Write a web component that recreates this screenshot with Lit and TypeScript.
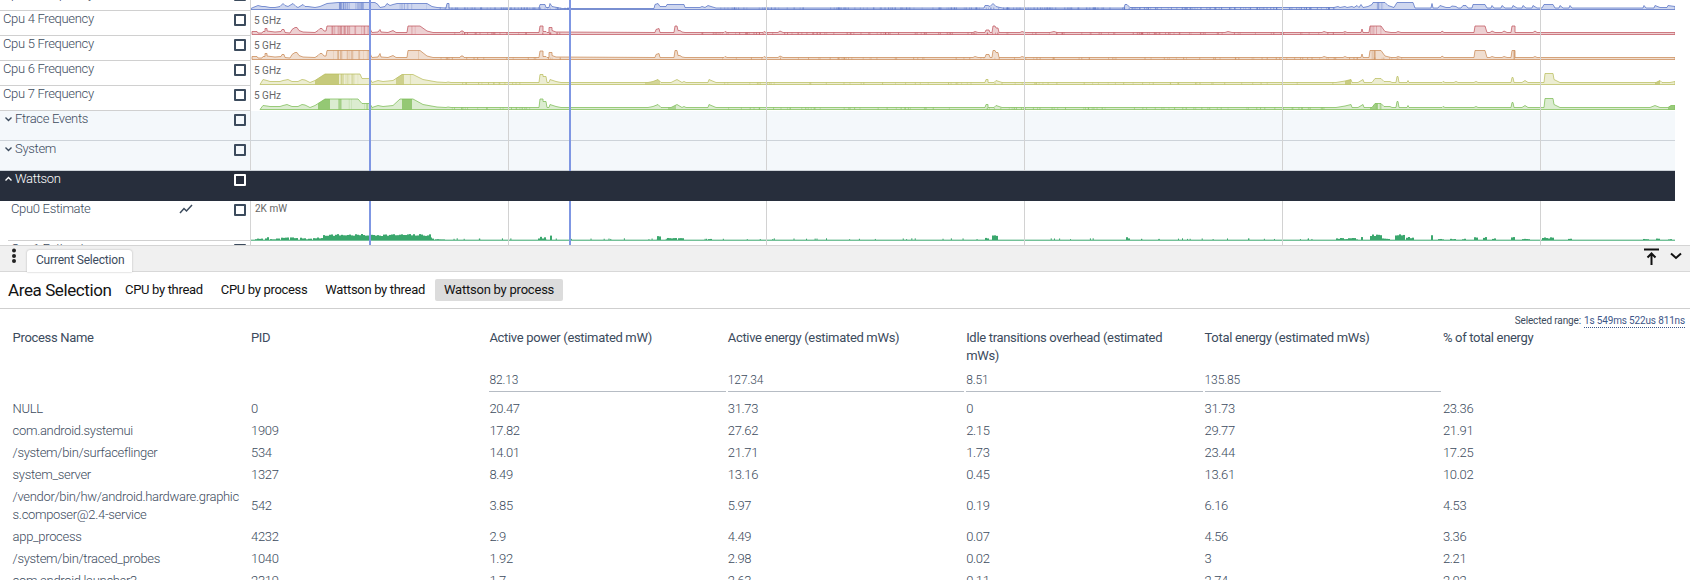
import { LitElement, html, svg, css } from "lit";
import { customElement } from "lit/decorators.js";

// x range of the timeline, in page pixels
const X0 = 251;
const X1 = 1675;
const GRID = [508, 766, 1024, 1282, 1540];
const SELECTION = [369, 569];

interface Series {
  id: string;
  color: string;
  points: string;
  solid?: number[][];
  stripes?: number[][];
  noise?: number[][];
}

// "x,h" pairs; h is height above the baseline
const SERIES: Series[] = [
  {
    id: "c3",
    color: "#5470c4",
    points:
      "251,1 253,2 258,4 262,3 265,3 270,2 275,2 280,3 283,6 285,4 288,3 293,6 296,3 298,2 303,5 305,3 308,3 315,2 320,3 327,6 338,7 368,7 375,7 378,5 380,2 385,3 387,6 390,4 393,5 397,6 427,6 432,3 437,2 446,1.5 447,6 449,6 449,1.5 539,1.5 540,5 545,5 546,2 549,2 550,6 552,3 557,2 562,1 654,1 655,5 658,6 660,3 666,3 667,5 684,5 685,2 700,2 702,3 705,2 708,4 711,3 716,1.5 984,1.5 985,4 988,4 990,3 993,6 996,3 1000,2 1003,1.5 1124,1.5 1125,5 1127,5 1130,2 1334,2 1338,3 1340,2 1345,3 1347,2 1352,3 1354,2 1357,4 1359,2 1361,5 1363,2 1368,3 1372,5 1373,7 1385,7 1388,4 1391,3 1394,2 1397,7 1413,7 1415,1.5 1431,1.5 1432,6 1433,1.5 1438,1.5 1440,4 1446,2 1450,2 1452,3.5 1456,3 1458,1.5 1461,1.5 1463,4 1466,4 1468,1.5 1472,1.5 1473,5 1485,5 1487,1.5 1491,1.5 1492,4 1494,1.5 1501,1.5 1502,4 1505,1.5 1512,1.5 1513,4 1517,1.5 1522,1.5 1523,4 1526,1.5 1532,1.5 1533,4 1537,1.5 1542,1.5 1544,5 1553,5 1555,1.5 1559,1.5 1560,4 1563,1.5 1569,1.5 1570,4 1572,1.5 1643,1.5 1644,4 1646,1.5 1654,1.5 1655,4 1660,2 1667,2 1668,4 1675,3",
    stripes: [[338, 368, 22], [395, 427, 6], [1373, 1385, 4]],
    noise: [[437, 570, 60], [720, 1335, 240]],
  },
  {
    id: "c4",
    color: "#c0555f",
    points:
      "252,3 257,3 258,1.5 262,1.5 263,3 265,3 265,6 267,6 267,3.5 275,2.5 281,3 282,5 284,5 285,2 290,1.5 292,5 295,7 297,7 299,4 303,2.5 315,2 318,4 320,6 322,6 324,3.5 326,3.5 327,8.5 369,8.5 371,4 372,2 378,2.5 380,5 381,2.5 388,2 393,4 396,2 407,2 408,8.5 420,8.5 427,3.5 433,2 460,2 461,3.5 463,3.5 464,2 539,2 540,8.5 543,8.5 543,3 546,3 547,2 549,2 549,7 552,7 552,4 556,2.5 655,2 656,5 659,6 660,2 674,2 675,8.5 677,8.5 678,4 680,4 682,2.5 685,2 724,2 725,3 727,2 763,2 764,3 766,2 778,2 780,3.5 783,2 973,2 975,3 978,2 985,2 986,4.5 989,4.5 990,2 992,2 993,8.5 995,8.5 996,6.5 998,6.5 999,2 1020,2 1022,3 1025,2 1050,2 1054,3 1057,2 1225,2 1228,3 1232,2 1322,2 1324,3 1327,2 1343,2 1345,3 1347,2 1361,2 1362,5.5 1363,2 1369,2 1370,8.5 1381,8.5 1385,3 1391,2 1396,2 1398,3 1401,2 1441,2 1442,3.5 1444,2 1474,2 1475,8.5 1485,8.5 1487,2 1490,2 1492,3.5 1495,2 1502,2 1504,3.5 1507,2 1511,2 1512,8.5 1515,8.5 1515,2 1533,2 1535,3.5 1537,2 1675,2",
    stripes: [[327, 369, 18], [408, 420, 2], [1370, 1381, 5]],
    noise: [[440, 560, 30], [700, 1345, 150]],
  },
  {
    id: "c5",
    color: "#c98a55",
    points:
      "252,3 257,3 258,1.5 262,1.5 263,3 265,3 265,6 267,6 267,3.5 275,2.5 281,3 282,5 284,5 285,2 290,1.5 292,5 295,7 297,7 299,4 303,2.5 315,2 318,4 320,6 322,6 324,3.5 326,3.5 327,9 369,9 371,4 372,2 378,2.5 380,6 381,2.5 388,2 393,4 396,2 407,2 408,9 420,9 427,3.5 433,2 460,2 461,3.5 463,3.5 464,2 539,2 540,8.5 543,8.5 543,3 546,3 547,2 549,2 549,7 552,7 552,4 556,2.5 655,2 656,5 659,6 660,2 674,2 675,9 677,9 678,4 680,4 682,2.5 685,2 724,2 725,3 727,2 763,2 764,3 766,2 778,2 780,3.5 783,2 973,2 975,3 978,2 985,2 986,5 989,5 990,2 992,2 993,9 995,9 996,7 998,7 999,2 1020,2 1022,3 1025,2 1322,2 1324,3 1327,2 1343,2 1345,3 1347,2 1361,2 1362,5.5 1363,2 1369,2 1370,9 1381,9 1385,3.5 1391,2 1396,2 1398,3 1401,2 1441,2 1442,3.5 1444,2 1474,2 1475,9 1485,9 1487,2 1490,2 1492,3 1495,2 1502,2 1504,3 1507,2 1511,2 1512,9 1515,9 1515,2 1533,2 1535,3 1537,2 1675,2",
    stripes: [[327, 369, 14], [408, 420, 1], [1370, 1381, 4], [1512, 1515, 3]],
    noise: [[440, 560, 20], [700, 1410, 100]],
  },
  {
    id: "c6",
    color: "#b9bd5e",
    points:
      "260,0 263,5 267,4 270,3 280,3 283,4 288,5 292,3 298,3 302,5 305,4.5 310,2 315,4 325,10.5 360,10.5 362,6 370,6 372,2 378,4 383,3 393,4 402,10 413,10 423,5 437,2.5 446,2 448,2.5 451,2 539,2 540,10 543,10 543,8 546,8 547,2 549,2 550,5 556,3 561,2 648,2 653,3 658,5 661,2 671,2 677,5 682,2 684,3 686,2 708,2 709,5 716,2 985,2 986,5 988,5 988,2 994,2 996,4 1002,2 1336,2 1345,3.5 1351,5 1352,2 1358,2 1363,5 1364,2 1372,2 1375,6 1381,6 1384,3 1390,3 1392,2 1396,2 1397,8 1398,8 1399,2 1407,2 1408,4 1409,2 1442,2 1443,3 1445,2 1454,2 1456,3 1458,2 1474,2 1476,3 1478,2 1511,2 1512,7 1513,7 1514,2 1522,2 1525,4 1528,2 1544,2 1545,11 1553,11 1554,5 1560,2 1656,2 1660,4 1662,2 1670,2 1675,3",
    solid: [[315, 339, 0.75], [341, 344, 0.35], [396, 404, 0.6], [1345, 1351, 0.7], [1655, 1660, 0.7], [645, 660, 0.5]],
    stripes: [[339, 372, 8], [404, 413, 1]],
    noise: [[450, 530, 14], [720, 1335, 70]],
  },
  {
    id: "c7",
    color: "#7cbc55",
    points:
      "260,0 263,4 267,3.5 270,3 280,3 283,4 287,5 292,3 298,3 302,5 305,4.5 310,2 315,4 325,10.5 358,10.5 362,6 370,6 372,2 378,4 383,3 393,4 400,10.5 413,10.5 423,5 437,2.5 446,2 448,2.5 451,2 539,2 540,10.5 543,10.5 543,8 546,8 547,2 549,2 550,5 556,3 561,2 648,2 653,3 658,5 661,2 671,2 677,5 682,2 684,3 686,2 708,2 709,5 716,2 985,2 986,5 988,5 988,2 994,2 996,4 1002,2 1336,2 1345,3.5 1351,5 1352,2 1358,2 1363,5 1364,2 1372,2 1375,6 1381,6 1384,3 1390,3 1392,2 1396,2 1397,8 1398,8 1399,2 1407,2 1408,4 1409,2 1442,2 1443,3 1445,2 1474,2 1476,3 1478,2 1511,2 1512,7 1513,7 1514,2 1522,2 1525,4 1528,2 1544,2 1545,11 1553,11 1554,5 1560,2 1650,2 1655,4 1660,2 1668,2 1671,4 1675,4",
    solid: [[318, 330, 0.75], [338, 341, 0.4], [402, 412, 0.75], [668, 676, 0.5], [1370, 1378, 0.6], [1668, 1675, 0.7]],
    stripes: [[330, 372, 8], [1375, 1381, 2]],
    noise: [[450, 530, 20], [720, 1335, 100]],
  },
];

// [from, to, min height, max height]; bars are drawn with random heights in between
const WATTSON = [
  [255, 263, 0.5, 1.5], [265, 269, 1.5, 3], [270, 280, 0.5, 1.5], [281, 288, 1, 3.5],
  [290, 298, 1, 3], [300, 305, 1, 2.5], [306, 312, 0.5, 1.5], [313, 322, 1.5, 2.5],
  [323, 405, 4, 6], [405, 430, 4, 6], [430, 434, 1, 3], [435, 445, 0.2, 1],
  [538, 546, 1, 3.5], [550, 552, 3, 5], [657, 660, 3, 5], [667, 677, 1.5, 2.5],
  [678, 683, 1, 2], [708, 711, 0.8, 1.2], [985, 989, 1.5, 2.5], [992, 997, 3, 5],
  [1126, 1130, 1.5, 3], [1336, 1357, 0.5, 2], [1361, 1363, 2.5, 3], [1370, 1381, 3.5, 5.5],
  [1382, 1390, 1, 2], [1395, 1405, 4.5, 6], [1406, 1413, 1.5, 3], [1431, 1432, 4.5, 5],
  [1438, 1443, 0.5, 1.5], [1450, 1455, 0.5, 1.5], [1462, 1466, 0.5, 1.5], [1474, 1477, 2, 3],
  [1483, 1487, 2, 3], [1492, 1496, 1, 2], [1511, 1514, 2.5, 3], [1522, 1530, 0.5, 1.5],
  [1542, 1553, 1.5, 3], [1568, 1572, 0.5, 1.5], [1643, 1648, 0.5, 1.5], [1656, 1660, 0.5, 1.5],
  [1668, 1672, 0.5, 1.5],
];

const COLUMNS = [
  "Process Name",
  "PID",
  "Active power (estimated mW)",
  "Active energy (estimated mWs)",
  "Idle transitions overhead (estimated mWs)",
  "Total energy (estimated mWs)",
  "% of total energy",
];

const TOTALS = ["", "", "82.13", "127.34", "8.51", "135.85", ""];

const ROWS = [
  ["NULL", "0", "20.47", "31.73", "0", "31.73", "23.36"],
  ["com.android.systemui", "1909", "17.82", "27.62", "2.15", "29.77", "21.91"],
  ["/system/bin/surfaceflinger", "534", "14.01", "21.71", "1.73", "23.44", "17.25"],
  ["system_server", "1327", "8.49", "13.16", "0.45", "13.61", "10.02"],
  ["/vendor/bin/hw/android.hardware.graphics.composer@2.4-service", "542", "3.85", "5.97", "0.19", "6.16", "4.53"],
  ["app_process", "4232", "2.9", "4.49", "0.07", "4.56", "3.36"],
  ["/system/bin/traced_probes", "1040", "1.92", "2.98", "0.02", "3", "2.21"],
  ["com.android.launcher3", "2319", "1.7", "2.63", "0.11", "2.74", "2.02"],
];

const TABS = ["CPU by thread", "CPU by process", "Wattson by thread", "Wattson by process"];

function rng(seed: number) {
  let s = seed;
  return () => {
    s = (s * 1664525 + 1013904223) % 4294967296;
    return s / 4294967296;
  };
}

@customElement("app-root")
export class AppRoot extends LitElement {
  static styles = css`
    :host {
      display: block;
      width: 1690px;
      height: 580px;
      overflow: hidden;
      background: #fff;
      font-family: Roboto, "Liberation Sans", sans-serif;
      font-size: 13px;
      letter-spacing: -0.32px;
      color: #3c4b5d;
    }
    .tracks {
      position: relative;
      height: 245px;
      overflow: hidden;
    }
    .list {
      margin-top: -14px;
      width: 1675px;
    }
    .row {
      display: flex;
      height: 25px;
    }
    .row.group {
      height: 30px;
      background: #f4f8fb;
      border-bottom: 1px solid #cdd3d9;
      box-sizing: border-box;
    }
    .row.dark {
      position: relative;
      z-index: 2;
      background: #272e3c;
      color: #fff;
      border-bottom: 0;
    }
    .row.tall {
      height: 40px;
    }
    .head {
      flex: none;
      width: 251px;
      box-sizing: border-box;
      height: 100%;
      position: relative;
      display: flex;
      align-items: flex-start;
      padding-left: 3px;
      border-bottom: 1px solid #d0d0d0;
      border-right: 1px solid #d4d4d4;
      line-height: 16px;
      font-weight: 300;
    }
    .group .head {
      border-bottom: 0;
      padding-left: 5px;
    }
    .dark .head {
      border-right: 0;
    }
    .nested .head {
      border-bottom: 0;
      padding-left: 11px;
    }
    .nested .head::after {
      content: "";
      position: absolute;
      left: 8px;
      right: 0;
      bottom: 0;
      border-bottom: 1px solid #d0d0d0;
    }
    .chev {
      width: 7px;
      height: 16px;
      margin-right: 3px;
      flex: none;
    }
    .chart-icon {
      position: absolute;
      left: 179px;
      top: 2px;
    }
    .check {
      position: absolute;
      left: 234px;
      top: 3px;
      width: 12px;
      height: 12px;
      box-sizing: border-box;
      border: 2px solid #3c4b5d;
      border-radius: 1px;
    }
    .dark .check {
      border-color: #fff;
    }
    .chart {
      position: relative;
      flex: 1;
      min-width: 0;
    }
    .chart svg {
      display: block;
    }
    .scale {
      position: absolute;
      left: 3px;
      top: 3px;
      font-size: 10px;
      line-height: 14px;
      letter-spacing: 0;
      color: #666;
    }
    .tall .scale {
      left: 4px;
      top: 1px;
    }
    .vline {
      position: absolute;
      top: 0;
      bottom: 0;
      width: 1px;
      background: #d2d2d2;
      z-index: 1;
    }
    .vline.sel {
      width: 2px;
      background: #7f97e3;
    }
    .tabbar {
      display: flex;
      align-items: flex-end;
      height: 27px;
      box-sizing: border-box;
      background: #f0f0f0;
      border-top: 1px solid #d4d4d4;
      border-bottom: 1px solid #d8d8d8;
      position: relative;
    }
    .kebab {
      width: 27px;
      height: 26px;
      flex: none;
    }
    .tab {
      width: 105px;
      height: 22px;
      box-sizing: border-box;
      margin-bottom: -1px;
      padding-left: 9px;
      line-height: 20px;
      font-size: 12px;
      letter-spacing: -0.2px;
      background: #fff;
      border-radius: 3px 3px 0 0;
      box-shadow: 0 0 2px #aaa;
      white-space: nowrap;
    }
    .tab-actions {
      margin-left: auto;
      height: 26px;
    }
    .tab-actions svg {
      display: block;
    }
    .title-bar {
      display: flex;
      align-items: center;
      height: 37px;
      box-sizing: border-box;
      padding-left: 8px;
      border-bottom: 1px solid #cfcfcf;
      color: #121212;
    }
    .title {
      font-size: 17px;
      letter-spacing: -0.4px;
      width: 109px;
      flex: none;
      white-space: nowrap;
    }
    .pill {
      height: 22px;
      line-height: 22px;
      padding: 0 8px;
      margin-right: 2px;
      border-radius: 2px;
      white-space: nowrap;
    }
    .pill.on {
      padding: 0 9px;
      letter-spacing: -0.22px;
      background: #dcdcdc;
    }
    .range {
      display: flex;
      justify-content: flex-end;
      padding: 5px 5px 0 0;
      height: 14px;
      font-size: 10px;
      letter-spacing: -0.15px;
      line-height: 14px;
    }
    .range span {
      margin-left: 3px;
      color: #3d5688;
      border-bottom: 1px dotted #3d5688;
    }
    .grid {
      display: grid;
      grid-template-columns: repeat(7, 238.4px);
      padding-left: 12.6px;
      font-weight: 300;
      line-height: 17.5px;
    }
    .th {
      font-weight: 400;
      box-sizing: border-box;
      height: 44px;
      padding: 1px 16px 0 0;
    }
    .total {
      font-size: 12px;
      height: 19.5px;
      line-height: 17px;
      margin-right: 2px;
      margin-bottom: 6.5px;
      letter-spacing: -0.1px;
      box-sizing: border-box;
    }
    .total.line {
      border-bottom: 1px solid #b6bcc4;
    }
    .td {
      display: flex;
      align-items: center;
      padding: 2.25px 10px 2.25px 0;
      word-break: break-all;
    }
  `;

  private renderSeries(s: Series, seed: number) {
    const base = 23.5;
    const pts = s.points.split(" ").map((p) => p.split(",").map(Number));
    const d =
      `M${pts[0][0]},${base} ` +
      pts.map(([x, h]) => `L${x},${base - h}`).join(" ") +
      ` L${pts[pts.length - 1][0]},${base} Z`;
    const r = rng(seed);
    const marks: { x: number; w: number; o: number }[] = [];
    for (const [a, b, n] of s.stripes ?? []) {
      for (let i = 0; i < n; i++) {
        marks.push({ x: a + r() * (b - a), w: 0.5 + r() * 1.5, o: 0.15 + r() * 0.35 });
      }
    }
    const ticks: { x: number; o: number }[] = [];
    for (const [a, b, n] of s.noise ?? []) {
      for (let i = 0; i < n; i++) ticks.push({ x: a + r() * (b - a), o: 0.25 + r() * 0.4 });
    }
    return svg`<svg width=${X1 - X0} height="25" viewBox="${X0} 0 ${X1 - X0} 25">
      <defs><clipPath id=${s.id}><path d=${d}></path></clipPath></defs>
      <path d=${d} fill=${s.color} fill-opacity="0.28"></path>
      <g clip-path="url(#${s.id})" fill=${s.color}>
        ${(s.solid ?? []).map(([a, b, o]) => svg`<rect x=${a} y="0" width=${b - a} height="25" opacity=${o}></rect>`)}
        ${marks.map((m) => svg`<rect x=${m.x} y="0" width=${m.w} height="25" opacity=${m.o}></rect>`)}
      </g>
      <path d=${d} fill="none" stroke=${s.color} stroke-opacity="0.75"></path>
      ${ticks.map((t) => svg`<rect x=${t.x} y=${base - 2} width="1" height="2" fill=${s.color} opacity=${t.o}></rect>`)}
    </svg>`;
  }

  private renderWattson() {
    const r = rng(7);
    const bars: { x: number; w: number; h: number }[] = [];
    for (const [a, b, lo, hi] of WATTSON) {
      for (let x = a; x < b; x += 2) bars.push({ x, w: 2, h: lo + r() * (hi - lo) });
    }
    for (let i = 0; i < 70; i++) bars.push({ x: 450 + r() * 880, w: 1, h: 0.8 + r() });
    return svg`<svg width=${X1 - X0} height="40" viewBox="${X0} 0 ${X1 - X0} 40">
      <rect x=${X0} y="38.7" width=${X1 - X0} height="1" fill="#3aa76d"></rect>
      ${bars.map((b) => svg`<rect x=${b.x} y=${39 - b.h} width=${b.w} height=${b.h} fill="#3aa76d"></rect>`)}
    </svg>`;
  }

  private chevron(up: boolean) {
    return html`<svg class="chev" viewBox="0 0 7 16">
      <polyline
        points=${up ? "0.5,9.5 3.5,6.5 6.5,9.5" : "0.5,6.5 3.5,9.5 6.5,6.5"}
        fill="none"
        stroke="currentColor"
        stroke-width="1.4"
      ></polyline>
    </svg>`;
  }

  private freqRow(name: string, s: Series, i: number) {
    return html`<div class="row">
      <div class="head">${name}<span class="check"></span></div>
      <div class="chart">
        ${this.renderSeries(s, i + 11)}
        <span class="scale">5 GHz</span>
      </div>
    </div>`;
  }

  private groupRow(name: string, dark = false) {
    return html`<div class="row group ${dark ? "dark" : ""}">
      <div class="head">${this.chevron(dark)}${name}<span class="check"></span></div>
      <div class="chart"></div>
    </div>`;
  }

  render() {
    return html`
      <div class="tracks">
        <div class="list">
          ${SERIES.map((s, i) => this.freqRow(`Cpu ${i + 3} Frequency`, s, i))}
          ${this.groupRow("Ftrace Events")} ${this.groupRow("System")} ${this.groupRow("Wattson", true)}
          <div class="row tall nested">
            <div class="head">
              Cpu0 Estimate
              <svg class="chart-icon" width="14" height="12" viewBox="0 0 14 12">
                <polyline points="1,10 5,5.5 7.5,8 13,2" fill="none" stroke="#3c4b5d" stroke-width="1.5"></polyline>
              </svg>
              <span class="check"></span>
            </div>
            <div class="chart">${this.renderWattson()}<span class="scale">2K mW</span></div>
          </div>
          <div class="row nested">
            <div class="head">Cpu1 Estimate<span class="check"></span></div>
            <div class="chart"><span class="scale">2K mW</span></div>
          </div>
        </div>
        ${GRID.map((x) => html`<div class="vline" style="left:${x}px"></div>`)}
        ${SELECTION.map((x) => html`<div class="vline sel" style="left:${x}px"></div>`)}
      </div>

      <div class="tabbar">
        <svg class="kebab" viewBox="0 0 27 26">
          <circle cx="14" cy="5.5" r="2" fill="#222"></circle>
          <circle cx="14" cy="11" r="2" fill="#222"></circle>
          <circle cx="14" cy="16" r="2" fill="#222"></circle>
        </svg>
        <div class="tab">Current Selection</div>
        <div class="tab-actions">
          <svg width="50" height="26" viewBox="0 0 50 26">
            <path d="M4 4.5h15M11.5 20V9M7.5 12.5l4-4 4 4" fill="none" stroke="#111" stroke-width="2"></path>
            <polyline points="31,8.5 36,13 41,8.5" fill="none" stroke="#111" stroke-width="2"></polyline>
          </svg>
        </div>
      </div>

      <div class="title-bar">
        <div class="title">Area Selection</div>
        ${TABS.map((t, i) => html`<div class="pill ${i === 3 ? "on" : ""}">${t}</div>`)}
      </div>

      <div class="range">Selected range:<span>1s 549ms 522us 811ns</span></div>

      <div class="grid">
        ${COLUMNS.map((c) => html`<div class="th">${c}</div>`)}
        ${TOTALS.map((t) => html`<div class="total ${t ? "line" : ""}">${t}</div>`)}
        ${ROWS.map((row) => row.map((c) => html`<div class="td">${c}</div>`))}
      </div>
    `;
  }
}
